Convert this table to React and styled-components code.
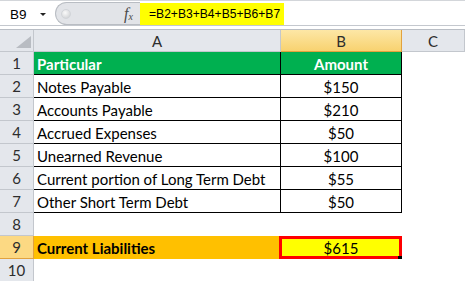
import React from 'react';
import styled, { createGlobalStyle } from 'styled-components';

const GlobalStyle = createGlobalStyle`
  html, body { margin: 0; padding: 0; background: #fff; }
  body { font-family: Lato, "Liberation Sans", sans-serif; }
`;

const Window = styled.div`
  width: 465px;
  height: 281px;
  overflow: hidden;
  background: #fff;
`;

const FormulaBar = styled.div`
  height: 30px;
  box-sizing: border-box;
  border-top: 1px solid #d3d6da;
  border-bottom: 1px solid #b9bec5;
  padding-top: 2px;
  background: #fff;
`;

const BarRow = styled.div`
  display: flex;
  height: 23px;
  box-sizing: border-box;
  border-bottom: 1px solid #c4c8ce;
  font-family: "Liberation Sans", Arial, sans-serif;
  font-size: 12.1px;
  color: #000;
`;

const NameBox = styled.div`
  width: 55px;
  flex: none;
  box-sizing: border-box;
  display: flex;
  align-items: center;
  justify-content: space-between;
  padding: 0 9px 0 10px;
  font-size: 13.5px;
`;

const Caret = styled.span`
  width: 0;
  height: 0;
  border-left: 3px solid transparent;
  border-right: 3px solid transparent;
  border-top: 3px solid #222;
`;

const Controls = styled.div`
  width: 85px;
  flex: none;
  box-sizing: border-box;
  display: flex;
  align-items: center;
  justify-content: space-between;
  padding: 0 7px 0 5px;
  background: #e2e4e8;
  border: 1px solid #b9bdc3;
  border-right: none;
  border-radius: 12px 0 0 12px;
  margin-top: -1px;
`;

const Knob = styled.span`
  width: 8px;
  height: 8px;
  border-radius: 50%;
  background: radial-gradient(circle at 40% 35%, #fafafa, #c9cccf);
  border: 1px solid #d2d5d9;
`;

const Fx = styled.span`
  font-family: "Liberation Serif", serif;
  font-style: italic;
  font-size: 16px;
  color: #4a4a4a;
  sub {
    font-size: 10px;
    vertical-align: baseline;
    position: relative;
    top: 1px;
  }
`;

const Formula = styled.div`
  flex: 1;
  display: flex;
  background: #fff;
`;

const Highlight = styled.span`
  width: 144px;
  flex: none;
  box-sizing: border-box;
  padding-left: 9px;
  display: flex;
  align-items: center;
  white-space: nowrap;
  background: #ffff00;
  height: 22px;
`;

const Sheet = styled.div`
  display: grid;
  grid-template-columns: 34px 247px 121px 1fr;
  grid-template-rows: 22px repeat(10, 23px);
`;

const headBg = '#e4e7ec';
const headLine = '#c3c7cd';

const Corner = styled.div`
  position: relative;
  background: ${headBg};
  border-right: 1px solid ${headLine};
  border-bottom: 1px solid ${headLine};
  box-sizing: border-box;
  &::after {
    content: '';
    position: absolute;
    right: 2px;
    bottom: 3px;
    width: 0;
    height: 0;
    border-left: 15px solid transparent;
    border-bottom: 12px solid #b8bcc2;
  }
`;

const ColHead = styled.div`
  display: flex;
  align-items: center;
  justify-content: center;
  box-sizing: border-box;
  font-size: 15px;
  color: #2d2d2d;
  background: ${p => (p.$active ? 'linear-gradient(#fde7a6, #f8d270)' : headBg)};
  border-right: 1px solid ${p => (p.$active ? '#e2a23e' : headLine)};
  border-bottom: 1px solid ${p => (p.$active ? '#e2a23e' : headLine)};
`;

const RowHead = styled.div`
  display: flex;
  align-items: center;
  justify-content: center;
  box-sizing: border-box;
  font-size: 15px;
  color: #2d2d2d;
  background: ${p => (p.$active ? '#fcd983' : headBg)};
  border-right: 1px solid ${p => (p.$active ? '#e2a23e' : headLine)};
  border-bottom: 1px solid ${p => (p.$active ? '#e2a23e' : headLine)};
`;

const tones = {
  head: { bg: '#00b050', color: '#fff', weight: 700, line: '#000' },
  plain: { bg: '#fff', color: '#000', weight: 400, line: '#000' },
  total: { bg: '#ffc000', color: '#000', weight: 700, line: 'transparent' },
  pick: { bg: '#ffff00', color: '#000', weight: 400, line: 'transparent' },
  none: { bg: '#fff', color: '#000', weight: 400, line: 'transparent' },
};

const Cell = styled.div`
  position: relative;
  display: flex;
  align-items: flex-end;
  justify-content: ${p => (p.$center ? 'center' : 'flex-start')};
  box-sizing: border-box;
  padding: 0 3px 1px;
  font-size: 15px;
  line-height: 18px;
  white-space: nowrap;
  background: ${p => tones[p.$tone].bg};
  color: ${p => tones[p.$tone].color};
  font-weight: ${p => tones[p.$tone].weight};
  border-right: 1px solid ${p => tones[p.$tone].line};
  border-bottom: 1px solid ${p => tones[p.$tone].line};
`;

const Selection = styled.span`
  position: absolute;
  left: -2px;
  right: -1px;
  top: 0;
  bottom: -1px;
  border: 3px solid #ff0000;
  pointer-events: none;
`;

const FillHandle = styled.span`
  position: absolute;
  right: -2px;
  bottom: -3px;
  width: 5px;
  height: 5px;
  background: #000;
`;

const rows = [
  { a: 'Particular', b: 'Amount', tone: 'head' },
  { a: 'Notes Payable', b: '$150', tone: 'plain' },
  { a: 'Accounts Payable', b: '$210', tone: 'plain' },
  { a: 'Accrued Expenses', b: '$50', tone: 'plain' },
  { a: 'Unearned Revenue', b: '$100', tone: 'plain' },
  { a: 'Current portion of Long Term Debt', b: '$55', tone: 'plain' },
  { a: 'Other Short Term Debt', b: '$50', tone: 'plain' },
  { a: '', b: '', tone: 'none' },
  { a: 'Current Liabilities', b: '$615', tone: 'total' },
  { a: '', b: '', tone: 'none' },
];

export default function App() {
  return (
    <Window>
      <GlobalStyle />
      <FormulaBar>
        <BarRow>
          <NameBox>
            <span>B9</span>
            <Caret />
          </NameBox>
          <Controls>
            <Knob />
            <Fx>f<sub>x</sub></Fx>
          </Controls>
          <Formula>
            <Highlight>=B2+B3+B4+B5+B6+B7</Highlight>
          </Formula>
        </BarRow>
      </FormulaBar>
      <Sheet>
        <Corner />
        <ColHead>A</ColHead>
        <ColHead $active>B</ColHead>
        <ColHead>C</ColHead>
        {rows.map((r, i) => (
          <React.Fragment key={i}>
            <RowHead $active={i === 8}>{i + 1}</RowHead>
            <Cell $tone={r.tone}>{r.a}</Cell>
            {r.tone === 'total' ? (
              <Cell $tone="pick" $center>
                {r.b}
                <Selection />
                <FillHandle />
              </Cell>
            ) : (
              <Cell $tone={r.tone} $center>{r.b}</Cell>
            )}
            <Cell $tone="none" />
          </React.Fragment>
        ))}
      </Sheet>
    </Window>
  );
}
